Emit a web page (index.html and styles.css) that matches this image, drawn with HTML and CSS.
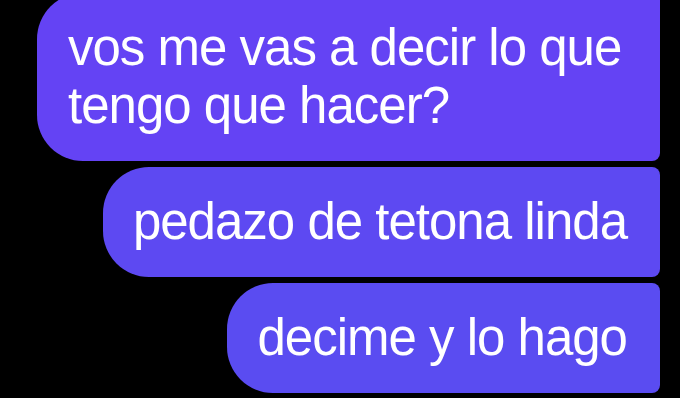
FILE: index.html
```html
<!DOCTYPE html>
<html lang="es">
<head>
<meta charset="utf-8">
<link rel="stylesheet" href="styles.css">
</head>
<body>
<div class="thread">
  <div class="bubble bubble-top">vos me vas a decir lo que tengo que hacer?</div>
  <div class="bubble bubble-mid">pedazo de tetona linda</div>
  <div class="bubble bubble-low">decime y lo hago</div>
</div>
</body>
</html>
```
FILE: styles.css
```css
html, body {
  margin: 0;
  background: #000;
  height: 100%;
  overflow: hidden;
}
.thread {
  display: flex;
  flex-direction: column;
  align-items: flex-end;
  gap: 6px;
  padding-right: 20px;
  margin-top: -7px;
}
.bubble {
  font-family: "Liberation Sans", Arial, sans-serif;
  font-size: 51px;
  letter-spacing: -1px;
  line-height: 58px;
  color: #fff;
  max-width: 623px;
  box-sizing: border-box;
  padding: 26px 33px 26px 30px;
  border-radius: 46px 8px 8px 46px;
}
.bubble-top {
  background: #6443f4;
  padding-left: 31px;
  padding-right: 30px;
}
.bubble-mid {
  background: #5d49f2;
  text-align: right;
}
.bubble-low {
  background: #5a4cf1;
  text-align: right;
}
```
